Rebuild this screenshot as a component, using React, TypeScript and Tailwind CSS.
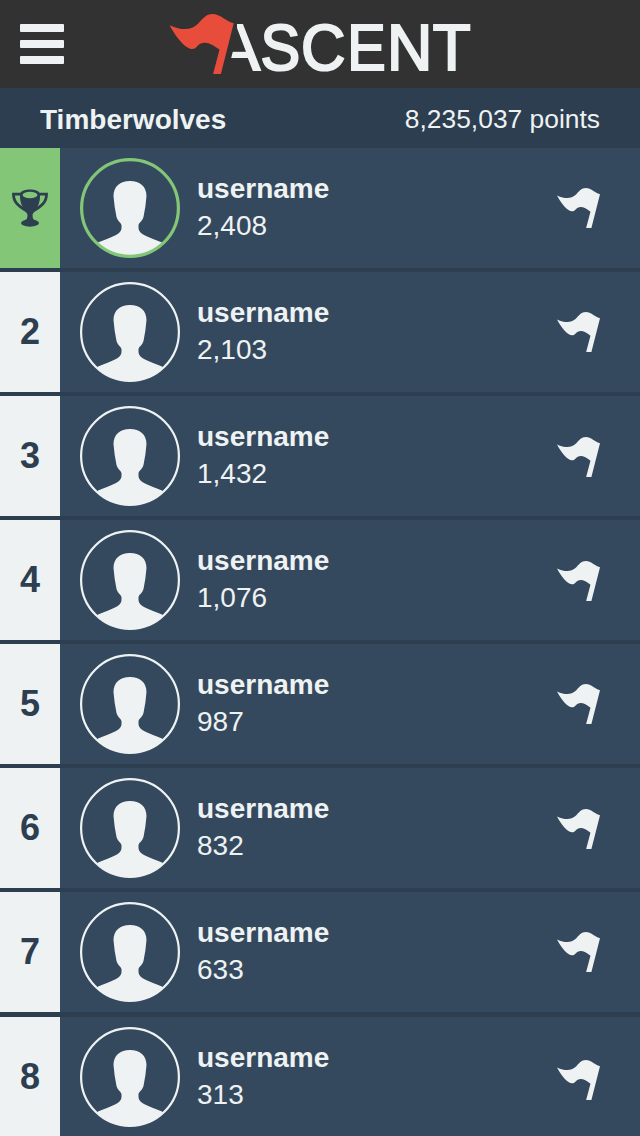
import React from "react";

const FLAG_PATH =
  "M0 11.2 C13 17 21 16 27.5 10.5 C33 5 36 0 43 0 C51 0 55 7 64 9.2 L51.2 60 L43.4 60 L49.8 35.6 C43 30.5 37 27 31 29.5 C27 31.500 27 35 22.5 35 C16 35 6 23 0 11.2 Z";

function Flag({ className }: { className: string }) {
  return (
    <svg viewBox="0 0 64 60" preserveAspectRatio="none" className={className} fill="currentColor">
      <path d={FLAG_PATH} />
    </svg>
  );
}

function Logo() {
  return (
    <svg
      width="312"
      height="88"
      viewBox="168 0 312 88"
      role="img"
      aria-label="Ascent"
      fontFamily="'Liberation Sans', Arial, sans-serif"
      fontSize="64"
      fill="#eef2f2"
      stroke="#eef2f2"
      strokeWidth="2.2"
    >
      <text x="217.2" y="69.5">A</text>
      <path d="M168 12H239L237 23.500V28L246 51.800H232.800L230.800 59.500V76H168Z" fill="#323232" stroke="none" />
      <text transform="translate(260.6 69.5) scale(.93 1)">S</text>
      <text transform="translate(301.1 69.5) scale(.96 1)">C</text>
      <text transform="translate(347.3 69.5) scale(.9 1)">E</text>
      <text transform="translate(387 69.5) scale(.98 1)">N</text>
      <text transform="translate(432.7 69.5) scale(.97 1)">T</text>
      <path d={FLAG_PATH} transform="translate(169.7 14)" fill="#e84c3a" stroke="none" />
    </svg>
  );
}

function Trophy() {
  return (
    <svg width="36" height="38" viewBox="0 0 36 38" fill="#2c3e50">
      <ellipse cx="18" cy="34" rx="9" ry="3.7" />
      <path d="M15.4 22H20.6V27C20.600 29 21 30 23 32H13C15 30 15.400 29 15.400 27Z" />
      <path d="M8 4.500C10 -1 26 -1 28 4.500C28.300 12 27 17 20.600 25H15.400C9 17 7.700 12 8 4.500Z" />
      <ellipse cx="18" cy="6" rx="7.400" ry="3.200" fill="#83c677" />
      <path d="M9 5.200H1.500C1.500 13 6 17 15 22M27 5.200H34.500C34.500 13 30 17 21 22" fill="none" stroke="#2c3e50" strokeWidth="2.800" />
    </svg>
  );
}

function Avatar({ winner }: { winner: boolean }) {
  const id = winner ? "winner-clip" : "member-clip";
  return (
    <svg width="100" height="100" viewBox="0 0 100 100" className="shrink-0">
      <defs>
        <clipPath id={id}>
          <circle cx="50" cy="50" r={winner ? 48 : 49} />
        </clipPath>
      </defs>
      <path
        clipPath={`url(#${id})`}
        fill="#eef2f2"
        d="M50 23C60 23 66.500 28.500 66.500 38C66 45 65 52 63.500 59C62.500 63 59.500 64 58.500 67V70C58.500 73 61 75.500 65 77.500C69 79.500 75 81.500 82 84.500L92 100H8L18 84.500C25 81.500 31 79.500 35 77.500C39 75.500 41.500 73 41.500 70V67C40.500 64 37.500 63 36.500 59C35 52 34 45 33.500 38C33.500 28.500 40 23 50 23Z"
      />
      <circle cx="50" cy="50" r={winner ? 48.4 : 48.9} fill="none" stroke={winner ? "#83c677" : "#eef2f2"} strokeWidth={winner ? 3.2 : 2.2} />
    </svg>
  );
}

const players = [
  { score: "2,408", flag: "" },
  { score: "2,103", flag: "" },
  { score: "1,432", flag: "mt-0.5" },
  { score: "1,076", flag: "mt-0.5" },
  { score: "987", flag: "" },
  { score: "832", flag: "mt-0.5" },
  { score: "633", flag: "" },
  { score: "313", flag: "mt-1.5" },
];

export default function App() {
  return (
    <div className="flex h-[1136px] w-[640px] flex-col overflow-hidden bg-[#2c3e50] font-['Liberation_Sans',Arial,sans-serif] text-[#eef2f2]">
      <header className="flex h-[88px] shrink-0 items-center bg-[#323232] pl-5">
        <button aria-label="Menu" className="flex w-11 flex-col gap-2">
          <span className="h-2 rounded-[1px] bg-[#eef2f2]" />
          <span className="h-2 rounded-[1px] bg-[#eef2f2]" />
          <span className="h-2 rounded-[1px] bg-[#eef2f2]" />
        </button>
        <div className="ml-[104px]">
          <Logo />
        </div>
      </header>
      <div className="flex h-[60px] shrink-0 items-center justify-between px-10 pt-1">
        <h1 className="text-[28px] leading-8 font-bold">Timberwolves</h1>
        <p className="pb-0.5 text-[26.4px] leading-8">8,235,037 points</p>
      </div>
      <ol className="flex flex-col">
        {players.map(({ score, flag }, i) => (
          <li key={score} className={`flex h-[120px] shrink-0 bg-[#34495e] ${i === 7 ? "mt-[5px]" : i > 0 ? "mt-1" : ""}`}>
            <div
              className={`flex w-[60px] items-center justify-center text-[36px] font-bold text-[#2c3e50] ${i === 0 ? "bg-[#83c677]" : "bg-[#eef2f2]"}`}
            >
              {i === 0 ? <Trophy /> : i + 1}
            </div>
            <div className="flex flex-1 items-center pr-10 pl-5">
              <Avatar winner={i === 0} />
              <div className="ml-[17px] flex-1 pb-0.5">
                <p className="text-[28px] leading-[37px] font-bold">username</p>
                <p className="text-[28px] leading-[37px]">{score}</p>
              </div>
              <Flag className={`h-10 w-[43px] ${flag}`} />
            </div>
          </li>
        ))}
      </ol>
    </div>
  );
}
